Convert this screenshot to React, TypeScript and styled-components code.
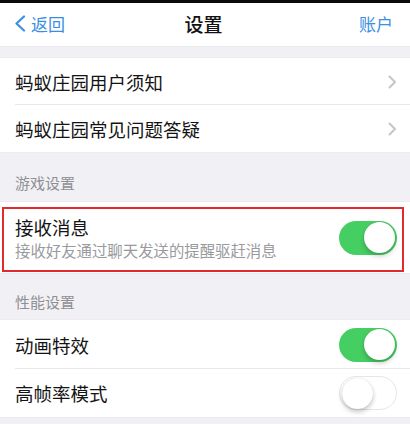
import React from "react";
import styled, { createGlobalStyle } from "styled-components";

const Global = createGlobalStyle`
  html, body { margin: 0; padding: 0; }
  body {
    background: #f1f1f5;
    font-family: "Noto Sans CJK SC", "Noto Sans", sans-serif;
    -webkit-font-smoothing: antialiased;
  }
`;

const Page = styled.div`
  width: 410px;
  height: 424px;
  overflow: hidden;
  background: #f1f1f5;
  display: flex;
  flex-direction: column;
`;

const StatusStrip = styled.div`
  height: 3px;
  background: #0a0a0a;
  flex: none;
`;

const NavBar = styled.div`
  height: 44px;
  flex: none;
  background: #ffffff;
  display: grid;
  grid-template-columns: 1fr auto 1fr;
  align-items: center;
  padding: 0 17px 2px 14px;
  border-bottom: 1px solid #e9e9ee;
  box-sizing: border-box;
`;

const NavButton = styled.div<{ $align: "left" | "right" }>`
  display: flex;
  align-items: center;
  justify-content: ${(p) => (p.$align === "left" ? "flex-start" : "flex-end")};
  gap: 5px;
  color: #3a8fe3;
  font-size: 17px;
  line-height: 22px;
`;

const NavTitle = styled.div`
  font-size: 19px;
  font-weight: 500;
  color: #111111;
  line-height: 24px;
`;

const Spacer = styled.div<{ $h: number }>`
  height: ${(p) => p.$h}px;
  flex: none;
`;

const Group = styled.div`
  background: #ffffff;
  flex: none;
  border-top: 1px solid #ececf0;
  border-bottom: 1px solid #ececf0;
`;

const Row = styled.div<{ $h: number; $divider?: boolean }>`
  height: ${(p) => p.$h}px;
  display: flex;
  align-items: center;
  justify-content: space-between;
  padding: 0 13px 0 15px;
  box-sizing: border-box;
  position: relative;
  ${(p) =>
    p.$divider
      ? `&::after { content: ""; position: absolute; left: 15px; right: 0; bottom: 0; height: 1px; background: #e8e8ec; }`
      : ""}
`;

const RowLabel = styled.div`
  font-size: 18.5px;
  line-height: 24px;
  color: #141414;
`;

const SectionHeader = styled.div<{ $h: number; $pt: number }>`
  height: ${(p) => p.$h}px;
  padding: ${(p) => p.$pt}px 0 0 15px;
  box-sizing: border-box;
  font-size: 15px;
  line-height: 20px;
  color: #8f8f94;
  flex: none;
`;

const Highlight = styled.div`
  margin: 5px 6px 1px 2px;
  border: 2px solid #e02a2f;
  height: 65px;
  box-sizing: border-box;
  display: flex;
  align-items: center;
  justify-content: space-between;
  padding: 0 5px 4px 11px;
`;

const TextStack = styled.div`
  display: flex;
  flex-direction: column;
`;

const SubLabel = styled.div`
  font-size: 15.4px;
  line-height: 22px;
  color: #9a9a9e;
`;

const Track = styled.div<{ $on: boolean }>`
  width: 58px;
  height: 34px;
  border-radius: 17px;
  box-sizing: border-box;
  background: ${(p) => (p.$on ? "#45cf62" : "#ffffff")};
  border: ${(p) => (p.$on ? "none" : "1.5px solid #e6e6ea")};
  display: flex;
  align-items: center;
  justify-content: ${(p) => (p.$on ? "flex-end" : "flex-start")};
  padding: 0 2px;
  flex: none;
`;

const Knob = styled.div`
  width: 31px;
  height: 31px;
  border-radius: 50%;
  background: #ffffff;
  box-shadow: 0 3px 5px rgba(0, 0, 0, 0.22), 0 0 1px rgba(0, 0, 0, 0.2);
`;

const Toggle = ({ on }: { on: boolean }) => (
  <Track $on={on}>
    <Knob />
  </Track>
);

const Chevron = () => (
  <svg width="9" height="14" viewBox="0 0 9 14">
    <path d="M1.5 1.5 L7 7 L1.5 12.5" fill="none" stroke="#c5c5ca" strokeWidth="2" strokeLinecap="round" strokeLinejoin="round" />
  </svg>
);

const BackArrow = () => (
  <svg width="12" height="17" viewBox="0 0 12 17">
    <path d="M10 1.5 L2.5 8.5 L10 15.5" fill="none" stroke="#3a8fe3" strokeWidth="2.2" strokeLinecap="round" strokeLinejoin="round" />
  </svg>
);

export default function App() {
  return (
    <Page>
      <Global />
      <StatusStrip />
      <NavBar>
        <NavButton $align="left">
          <BackArrow />
          返回
        </NavButton>
        <NavTitle>设置</NavTitle>
        <NavButton $align="right">账户</NavButton>
      </NavBar>
      <Spacer $h={10} />
      <Group>
        <Row $h={47} $divider>
          <RowLabel>蚂蚁庄园用户须知</RowLabel>
          <Chevron />
        </Row>
        <Row $h={47}>
          <RowLabel>蚂蚁庄园常见问题答疑</RowLabel>
          <Chevron />
        </Row>
      </Group>
      <SectionHeader $h={48} $pt={20}>游戏设置</SectionHeader>
      <Group>
        <Highlight>
          <TextStack>
            <RowLabel>接收消息</RowLabel>
            <SubLabel>接收好友通过聊天发送的提醒驱赶消息</SubLabel>
          </TextStack>
          <Toggle on />
        </Highlight>
      </Group>
      <SectionHeader $h={45} $pt={18}>性能设置</SectionHeader>
      <Group>
        <Row $h={49} $divider>
          <RowLabel>动画特效</RowLabel>
          <Toggle on />
        </Row>
        <Row $h={48}>
          <RowLabel>高帧率模式</RowLabel>
          <Toggle on={false} />
        </Row>
      </Group>
    </Page>
  );
}
